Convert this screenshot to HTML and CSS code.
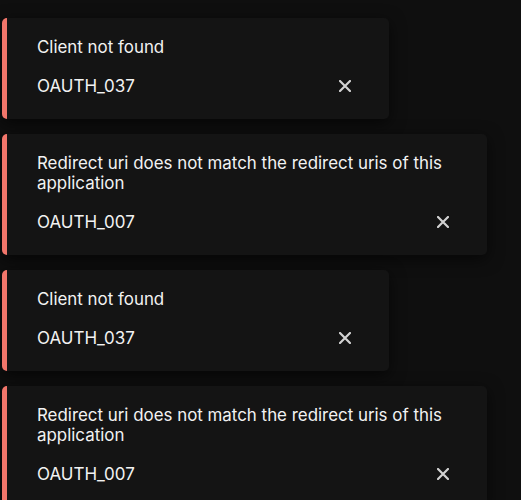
FILE: index.html
```html
<!DOCTYPE html>
<html lang="en">
<head>
    <meta charset="UTF-8">
    <meta name="viewport" content="width=device-width, initial-scale=1.0">
    <title>Toasts</title>
    <link rel="stylesheet" href="styles.css">
</head>
<body>
    <div class="toast-stack">
        <div class="toast" role="alert">
            <div class="toast-title">Client not found</div>
            <div class="toast-row">
                <span class="toast-code">OAUTH_037</span>
                <button class="toast-close" aria-label="Close">
                    <svg width="12" height="12" viewBox="0 0 12 12"><path d="M1 1L11 11M11 1L1 11" stroke="currentColor" stroke-width="2.2" stroke-linecap="round"/></svg>
                </button>
            </div>
        </div>
        <div class="toast" role="alert">
            <div class="toast-title">Redirect uri does not match the redirect uris of this application</div>
            <div class="toast-row">
                <span class="toast-code">OAUTH_007</span>
                <button class="toast-close" aria-label="Close">
                    <svg width="12" height="12" viewBox="0 0 12 12"><path d="M1 1L11 11M11 1L1 11" stroke="currentColor" stroke-width="2.2" stroke-linecap="round"/></svg>
                </button>
            </div>
        </div>
        <div class="toast" role="alert">
            <div class="toast-title">Client not found</div>
            <div class="toast-row">
                <span class="toast-code">OAUTH_037</span>
                <button class="toast-close" aria-label="Close">
                    <svg width="12" height="12" viewBox="0 0 12 12"><path d="M1 1L11 11M11 1L1 11" stroke="currentColor" stroke-width="2.2" stroke-linecap="round"/></svg>
                </button>
            </div>
        </div>
        <div class="toast" role="alert">
            <div class="toast-title">Redirect uri does not match the redirect uris of this application</div>
            <div class="toast-row">
                <span class="toast-code">OAUTH_007</span>
                <button class="toast-close" aria-label="Close">
                    <svg width="12" height="12" viewBox="0 0 12 12"><path d="M1 1L11 11M11 1L1 11" stroke="currentColor" stroke-width="2.2" stroke-linecap="round"/></svg>
                </button>
            </div>
        </div>
    </div>
</body>
</html>
```

FILE: styles.css
```css
body {
    background: #0f0f0f;
    font-family: 'Inter', 'Noto Sans', sans-serif;
    color: #f2f2f2;
    margin: 0;
    height: 100vh;
    overflow: hidden;
}
.toast-stack {
    display: flex;
    flex-direction: column;
    align-items: flex-start;
    gap: 15px;
    padding: 18px 0 0 2px;
}
.toast {
    box-sizing: border-box;
    width: fit-content;
    min-width: 387px;
    max-width: 485px;
    background: #141414;
    border-left: 5px solid #f2766b;
    border-radius: 5px;
    padding: 19px 27px 16px 30px;
    box-shadow: 0 4px 16px rgba(0,0,0,0.6);
}
.toast-title {
    font-size: 16.9px;
    line-height: 20px;
}
.toast-row {
    display: flex;
    align-items: center;
    justify-content: space-between;
    margin-top: 12px;
    height: 34px;
}
.toast-code {
    font-size: 17px;
}
.toast-close {
    width: 34px;
    height: 34px;
    padding: 0;
    border: none;
    background: transparent;
    color: #d2d2d2;
    display: flex;
    align-items: center;
    justify-content: center;
    cursor: pointer;
}
```
